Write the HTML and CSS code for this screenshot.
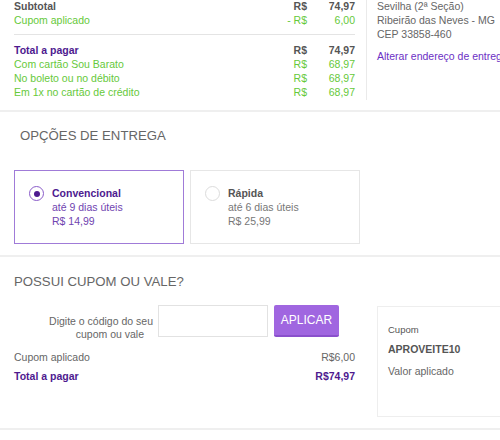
FILE: index.html
```html
<!DOCTYPE html>
<html lang="pt-BR">

<head>
    <meta charset="UTF-8">
    <meta name="viewport" content="width=device-width, initial-scale=1.0">
    <title>Carrinho - Resumo</title>
    <link rel="stylesheet" href="styles.css">
</head>

<body>
    <div id="resumo">
        <div id="totais">
            <div class="linha forte">
                <span class="rotulo">Subtotal</span>
                <span class="moeda">R$</span>
                <span class="valor">74,97</span>
            </div>
            <div class="linha verde">
                <span class="rotulo">Cupom aplicado</span>
                <span class="moeda">- R$</span>
                <span class="valor">6,00</span>
            </div>
            <hr class="divisor">
            <div class="linha roxo">
                <span class="rotulo">Total a pagar</span>
                <span class="moeda">R$</span>
                <span class="valor">74,97</span>
            </div>
            <div class="linha verde">
                <span class="rotulo">Com cartão Sou Barato</span>
                <span class="moeda">R$</span>
                <span class="valor">68,97</span>
            </div>
            <div class="linha verde">
                <span class="rotulo">No boleto ou no débito</span>
                <span class="moeda">R$</span>
                <span class="valor">68,97</span>
            </div>
            <div class="linha verde">
                <span class="rotulo">Em 1x no cartão de crédito</span>
                <span class="moeda">R$</span>
                <span class="valor">68,97</span>
            </div>
        </div>

        <div id="endereco">
            <div>Sevilha (2ª Seção)</div>
            <div>Ribeirão das Neves - MG</div>
            <div>CEP 33858-460</div>
            <a href="#" id="alterar">Alterar endereço de entrega</a>
        </div>
    </div>

    <div id="entrega">
        <h2 class="titulo" id="titulo-entrega">OPÇÕES DE ENTREGA</h2>
        <div id="opcoes">
            <label class="opcao ativa">
                <span class="radio"></span>
                <span class="texto">
                    <strong>Convencional</strong>
                    <span>até 9 dias úteis</span>
                    <span>R$ 14,99</span>
                </span>
            </label>
            <label class="opcao">
                <span class="radio"></span>
                <span class="texto">
                    <strong>Rápida</strong>
                    <span>até 6 dias úteis</span>
                    <span>R$ 25,99</span>
                </span>
            </label>
        </div>
    </div>

    <div id="cupom">
        <h2 class="titulo">POSSUI CUPOM OU VALE?</h2>
        <div id="cupom-corpo">
            <div id="cupom-form">
                <div id="campo">
                    <p id="instrucao">
                        <span>Digite o código do seu</span>
                        <span class="segunda">cupom ou vale</span>
                    </p>
                    <input type="text" id="codigo">
                    <button id="aplicar">APLICAR</button>
                </div>
                <div class="linha-cupom">
                    <span>Cupom aplicado</span>
                    <span>R$6,00</span>
                </div>
                <div class="linha-cupom total">
                    <span>Total a pagar</span>
                    <span>R$74,97</span>
                </div>
            </div>

            <div id="cupom-info">
                <div id="cupom-label">Cupom</div>
                <div id="cupom-nome">APROVEITE10</div>
                <div id="cupom-valor">Valor aplicado</div>
            </div>
        </div>
    </div>
</body>

</html>
```

FILE: styles.css
```css
body {
    margin: 0;
    font-family: 'Liberation Sans', Arial, sans-serif;
    font-size: 10.5px;
    color: #666;
    background-color: white;
    overflow: hidden;
}

/* resumo do pedido */
#resumo {
    display: flex;
    padding-bottom: 10px;
    border-bottom: 2px solid #efefef;
}

#totais {
    flex-shrink: 0;
    width: 341px;
    height: 100px;
    padding: 0 11px 0 14px;
    border-right: 1px solid #eaeaea;
    line-height: 14.3px;
}

#totais .linha:first-child {
    margin-top: -1px;
}

.linha {
    display: flex;
}

.rotulo {
    flex: 1;
}

.moeda {
    text-align: right;
}

.valor {
    width: 48px;
    text-align: right;
}

.forte {
    color: #555;
    font-weight: bold;
}

.verde {
    color: #66c93a;
}

.roxo {
    color: #4e1a8f;
    font-weight: bold;
}

.forte .moeda,
.roxo .moeda,
.forte .valor,
.roxo .valor {
    color: #555;
}

.divisor {
    border: none;
    border-top: 1px solid #e4e4e4;
    margin: 6px 0 8px 0;
}

#endereco {
    padding-left: 10px;
    line-height: 14.2px;
    white-space: nowrap;
}

#endereco div:first-child {
    margin-top: -1px;
}

#alterar {
    display: block;
    margin-top: 7px;
    color: #6b2fc4;
    text-decoration: none;
}

/* opções de entrega */
.titulo {
    margin: 0;
    font-size: 13.2px;
    font-weight: normal;
    line-height: 16px;
    color: #666;
    padding-left: 14px;
}

#entrega {
    padding: 16px 0 11px 0;
    border-bottom: 2px solid #efefef;
}

#titulo-entrega {
    padding-left: 20px;
}

#opcoes {
    display: flex;
    gap: 6px;
    padding-left: 14px;
    margin-top: 26px;
}

.opcao {
    display: flex;
    box-sizing: border-box;
    width: 170px;
    height: 74px;
    padding: 15px 0 0 14px;
    border: 1px solid #e6e6e6;
    line-height: 14px;
    color: #777;
}

.opcao.ativa {
    border-color: #a07bd8;
    color: #6f44b0;
}

.radio {
    box-sizing: border-box;
    width: 15px;
    height: 15px;
    border: 1px solid #dcdcdc;
    border-radius: 50%;
    position: relative;
    flex-shrink: 0;
}

.ativa .radio {
    border-color: #8a5cc9;
}

.ativa .radio::after {
    content: '';
    position: absolute;
    top: 3.5px;
    left: 3.5px;
    width: 6px;
    height: 6px;
    border-radius: 50%;
    background-color: #4e1a8f;
}

.texto {
    display: flex;
    flex-direction: column;
    margin-left: 8px;
}

.texto strong {
    color: #555;
}

.ativa .texto strong {
    color: #4e1a8f;
}

/* cupom */
#cupom {
    padding: 17px 0 11px 0;
    border-bottom: 2px solid #efefef;
}

#cupom-corpo {
    display: flex;
    margin-top: 15px;
}

#cupom-form {
    flex-shrink: 0;
    width: 341px;
    padding-left: 14px;
}

#campo {
    display: flex;
    align-items: flex-start;
}

#instrucao {
    margin: 0;
    width: 139px;
    padding-top: 9.5px;
    line-height: 13.5px;
    text-align: right;
}

#instrucao span {
    display: block;
}

#instrucao .segunda {
    padding-right: 9px;
}

#codigo {
    box-sizing: border-box;
    width: 110px;
    height: 32px;
    margin: 0 0 0 5px;
    border: 1px solid #e2e2e2;
    outline: none;
}

#aplicar {
    width: 65px;
    height: 32px;
    margin-left: 6px;
    padding: 0;
    font-family: inherit;
    font-size: 12px;
    color: white;
    background-color: #a066e0;
    border: none;
    border-bottom: 2px solid #8a50cc;
    border-radius: 2px;
}

.linha-cupom {
    display: flex;
    justify-content: space-between;
    line-height: 14px;
    margin-top: 8.5px;
}

.linha-cupom.total {
    margin-top: 5.4px;
    font-weight: bold;
    color: #4e1a8f;
}

#cupom-info {
    flex: 1;
    height: 111px;
    box-sizing: border-box;
    margin: 1px 0 0 22px;
    padding: 17px 0 0 10px;
    border: 1px solid #eeeeee;
    border-right: none;
}

#cupom-label {
    font-size: 9.5px;
    line-height: 12px;
    color: #555;
}

#cupom-nome {
    margin-top: 6px;
    font-weight: bold;
    color: #555;
    line-height: 14px;
}

#cupom-valor {
    margin-top: 8px;
    line-height: 14px;
}
```
